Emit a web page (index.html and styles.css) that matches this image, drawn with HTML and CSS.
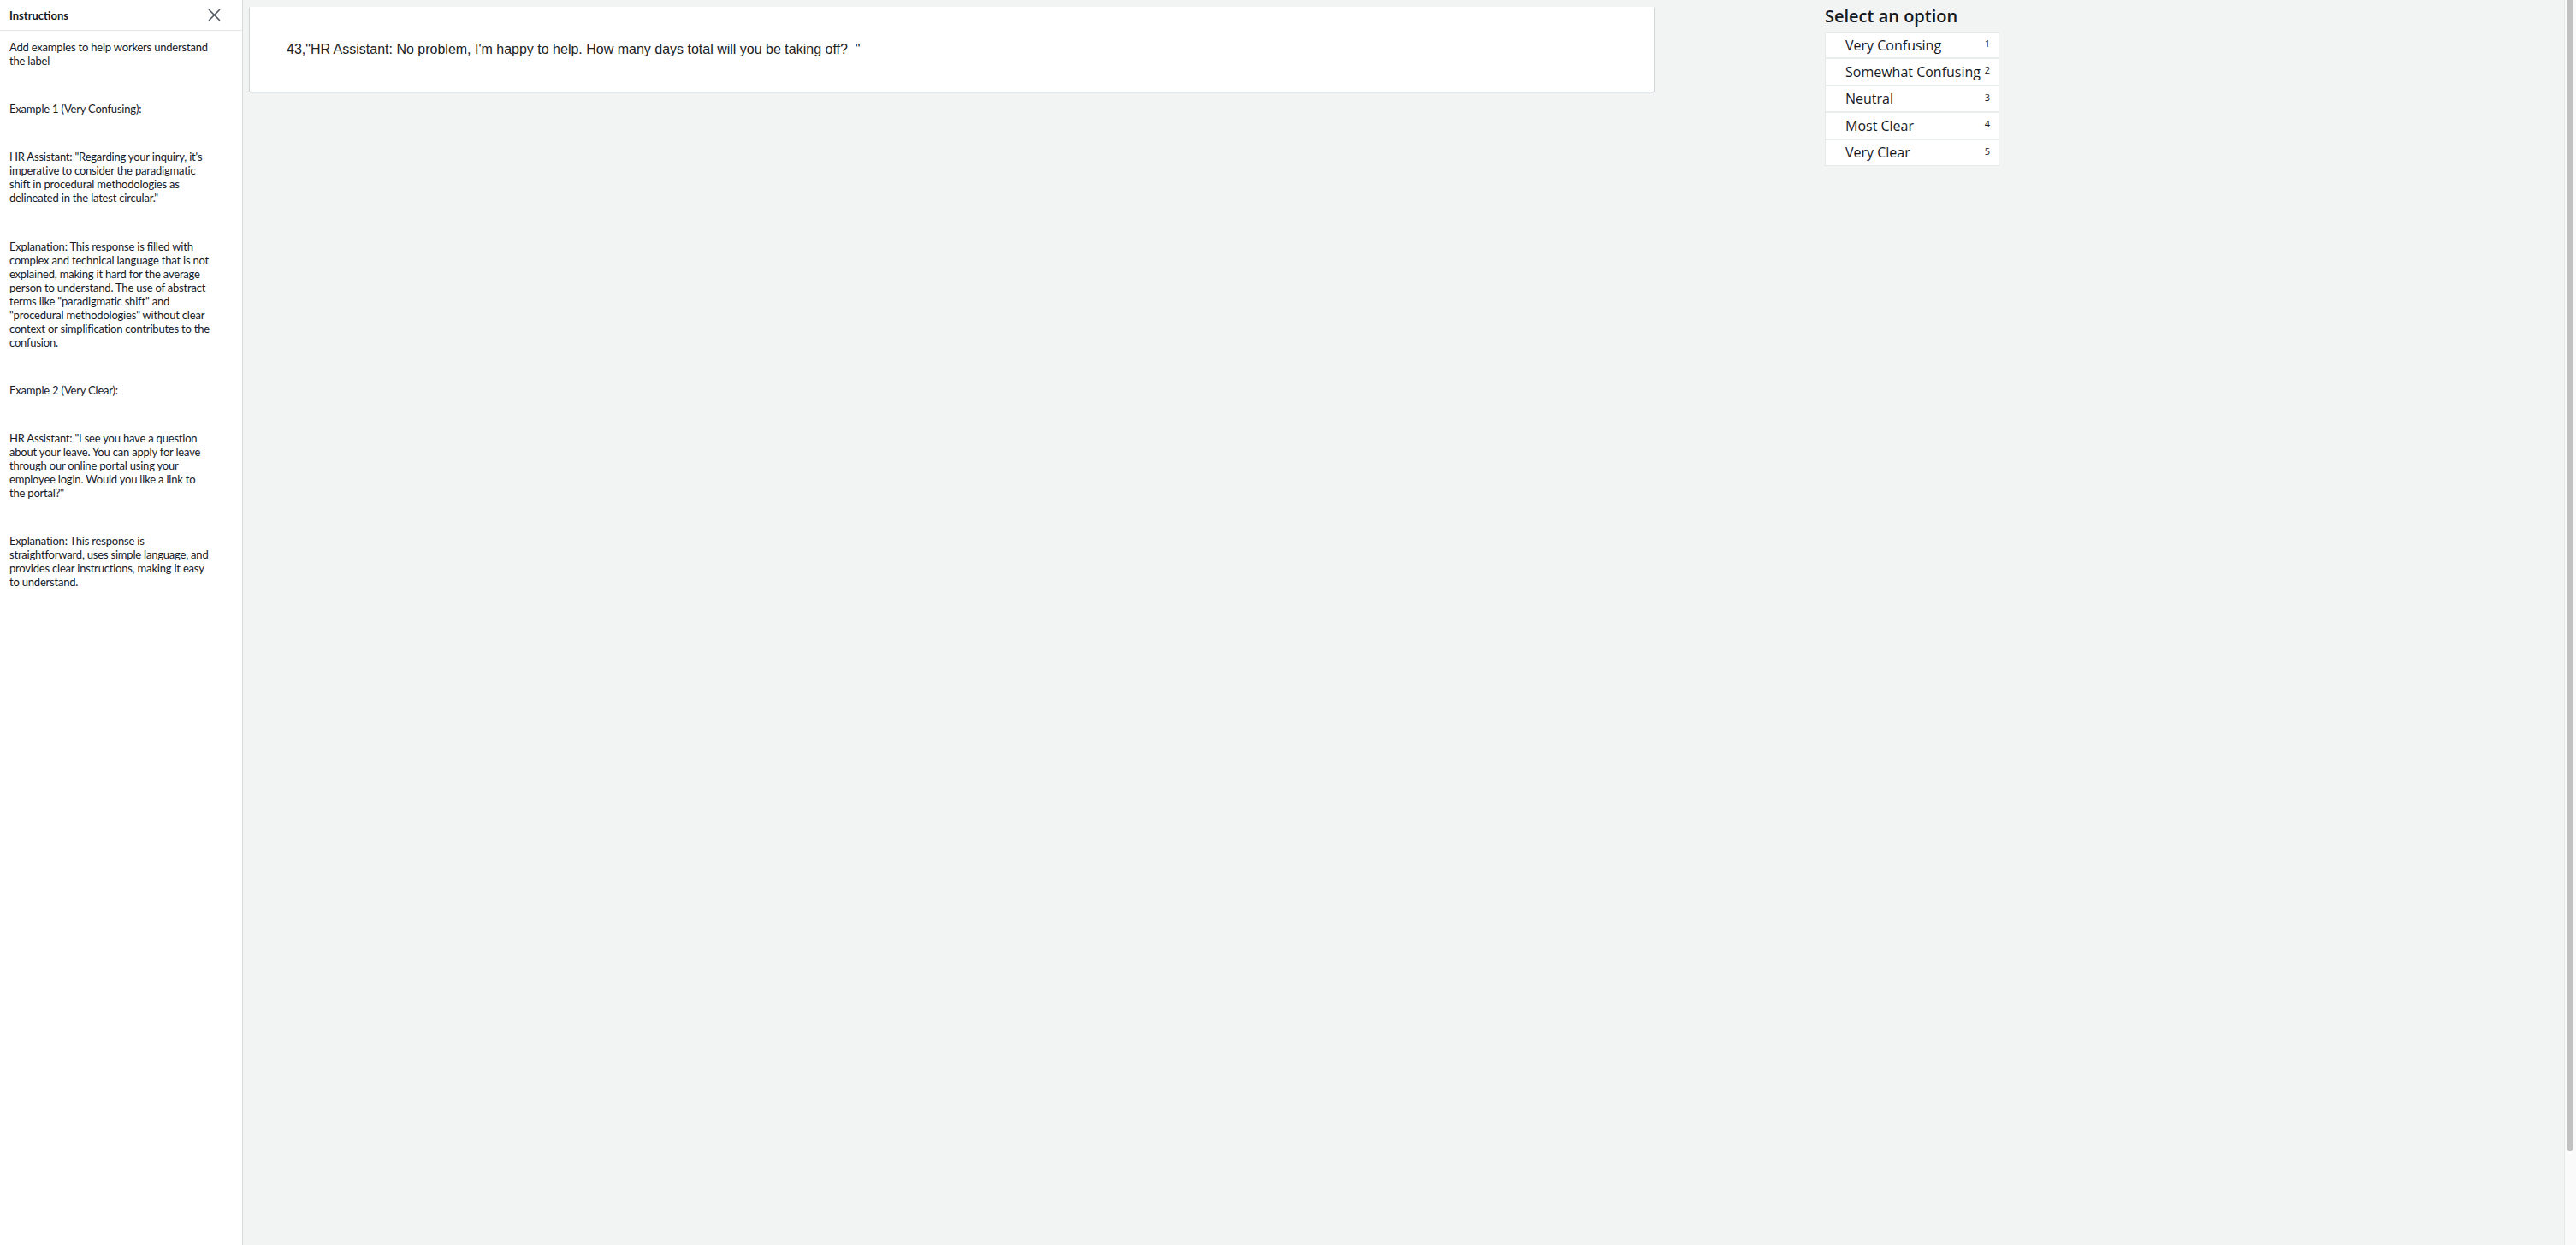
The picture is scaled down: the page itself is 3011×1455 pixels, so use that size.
FILE: index.html
```html
<!DOCTYPE html>
<html lang="en">
<head>
<meta charset="utf-8">
<title>Labeling task</title>
<link rel="stylesheet" href="styles.css">
</head>
<body>
<div class="app">
  <aside class="sidebar">
    <header class="sb-head">
      <span class="sb-title">Instructions</span>
      <button class="close" aria-label="Close">
        <svg width="15" height="15" viewBox="0 0 15 15"><path d="M1.5 1.5 L13.5 13.5 M13.5 1.5 L1.5 13.5" stroke="#545b64" stroke-width="1.6" fill="none" stroke-linecap="round"/></svg>
      </button>
    </header>
    <div class="sb-body">
      <p>Add examples to help workers understand<br>the label</p>
      <p>Example 1 (Very Confusing):</p>
      <p>HR Assistant: "Regarding your inquiry, it's<br>imperative to consider the paradigmatic<br>shift in procedural methodologies as<br>delineated in the latest circular."</p>
      <p>Explanation: This response is filled with<br>complex and technical language that is not<br>explained, making it hard for the average<br>person to understand. The use of abstract<br>terms like "paradigmatic shift" and<br>"procedural methodologies" without clear<br>context or simplification contributes to the<br>confusion.</p>
      <p>Example 2 (Very Clear):</p>
      <p>HR Assistant: "I see you have a question<br>about your leave. You can apply for leave<br>through our online portal using your<br>employee login. Would you like a link to<br>the portal?"</p>
      <p>Explanation: This response is<br>straightforward, uses simple language, and<br>provides clear instructions, making it easy<br>to understand.</p>
    </div>
  </aside>
  <main class="main">
    <section class="card">
      <p class="card-text">43,"HR Assistant: No problem, I'm happy to help. How many days total will you be taking off?  "</p>
    </section>
    <section class="options">
      <h2 class="opt-title">Select an option</h2>
      <ul class="opt-list">
        <li class="opt"><span class="opt-label">Very Confusing</span><span class="opt-key">1</span></li>
        <li class="opt"><span class="opt-label">Somewhat Confusing</span><span class="opt-key">2</span></li>
        <li class="opt"><span class="opt-label">Neutral</span><span class="opt-key">3</span></li>
        <li class="opt"><span class="opt-label">Most Clear</span><span class="opt-key">4</span></li>
        <li class="opt"><span class="opt-label">Very Clear</span><span class="opt-key">5</span></li>
      </ul>
    </section>
  </main>
  <div class="scrollbar"><div class="thumb"></div></div>
</div>
</body>
</html>
```
FILE: styles.css
```css
html, body {
  margin: 0;
  height: 100%;
}
body {
  background: #f2f3f3;
  color: #16191f;
  font-family: "Open Sans", "Noto Sans", sans-serif;
  overflow: hidden;
}
.app {
  display: flex;
  height: 100vh;
}
.sidebar {
  width: 284px;
  flex: none;
  box-sizing: border-box;
  background: #fff;
  border-right: 1px solid #d5dbdb;
}
.sb-head {
  height: 36px;
  box-sizing: border-box;
  border-bottom: 1px solid #e4e7e7;
  display: flex;
  align-items: center;
  justify-content: space-between;
  padding: 0 25px 0 11px;
}
.sb-title {
  font-family: "Lato", sans-serif;
  font-weight: 700;
  font-size: 13px;
}
.close {
  border: 0;
  background: none;
  padding: 0;
  width: 15px;
  height: 15px;
  display: flex;
}
.sb-body {
  padding: 11px 16px 0 11px;
  font-family: "Lato", sans-serif;
  font-size: 13px;
  letter-spacing: -0.2px;
  line-height: 16px;
  white-space: nowrap;
}
.sb-body p {
  margin: 0 0 40.2px;
}
.main {
  flex: 1;
  display: flex;
  align-items: flex-start;
  padding: 8px 0 0 8px;
}
.card {
  width: 1641px;
  height: 99px;
  flex: none;
  background: #fff;
  border-radius: 1px;
  box-shadow: 0 1px 1px 0 rgba(0, 28, 36, 0.3), 1px 1px 1px 0 rgba(0, 28, 36, 0.12), -1px 1px 1px 0 rgba(0, 28, 36, 0.12);
  display: flex;
  align-items: center;
  padding-left: 43px;
  box-sizing: border-box;
}
.card-text {
  margin: 0;
  font-family: "Liberation Sans", Arial, sans-serif;
  font-size: 16px;
  color: #222;
  white-space: pre;
}
.options {
  margin-left: 200px;
  width: 204px;
  flex: none;
}
.opt-title {
  margin: 0 0 7px;
  font-size: 20px;
  font-weight: 600;
  line-height: 22px;
  white-space: nowrap;
}
.opt-list {
  list-style: none;
  margin: 0;
  padding: 0;
  background: #fff;
  border: 1px solid #e6e9e9;
}
.opt {
  height: 29.4px;
  display: flex;
  justify-content: space-between;
  align-items: center;
  padding: 0 10px 0 23px;
  border-top: 2px solid #eaeded;
  font-size: 16px;
}
.opt:first-child {
  border-top: 0;
}
.opt-label {
  white-space: nowrap;
}
.opt-key {
  align-self: flex-start;
  margin-top: 7px;
  font-size: 11px;
  line-height: 11px;
}
.scrollbar {
  width: 14px;
  flex: none;
  box-sizing: border-box;
  border-left: 1px solid #e8e8e8;
  background: #fafafa;
  padding-left: 2px;
}
.thumb {
  width: 8px;
  height: 1345px;
  background: #c1c1c1;
  border-radius: 0 0 4px 4px;
}
```
